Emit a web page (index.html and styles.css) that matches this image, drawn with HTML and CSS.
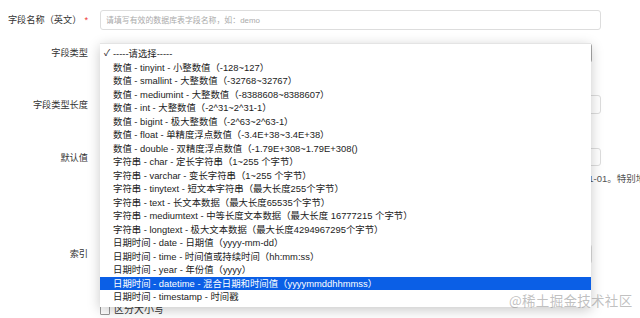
FILE: index.html
```html
<!DOCTYPE html>
<html lang="zh-CN">
<head>
    <meta charset="UTF-8">
    <meta name="viewport" content="width=device-width, initial-scale=1.0">
    <title>新增字段</title>
    <link rel="stylesheet" href="styles.css">
</head>
<body>
    <div class="form">
        <div class="row row-name">
            <label class="label">字段名称（英文）<span class="required">*</span></label>
            <div class="field">
                <input type="text" class="input" placeholder="请填写有效的数据库表字段名称，如：demo">
            </div>
        </div>

        <div class="row row-type">
            <label class="label">字段类型</label>
            <div class="field">
                <div class="input select-box focused"></div>
            </div>
        </div>

        <div class="row row-length">
            <label class="label">字段类型长度</label>
            <div class="field">
                <input type="text" class="input">
            </div>
        </div>

        <div class="row row-default">
            <label class="label">默认值</label>
            <div class="field">
                <input type="text" class="input">
                <p class="hint">默认值为字段的初始值，不填写则为空；数值类型请直接填写数字，字符串类型填写内容，日期类型的格式如 2019-01-01。特别地，时间戳可填写当前时间</p>
            </div>
        </div>

        <div class="row row-index">
            <label class="label">索引</label>
            <div class="field">
                <div class="input select-box"></div>
            </div>
        </div>

        <div class="row row-case">
            <span class="label"></span>
            <div class="field">
                <label class="check"><span class="box"></span>区分大小写</label>
            </div>
        </div>
    </div>

    <!-- native select popup, open over the form -->
    <ul class="menu">
        <li class="checked">-----请选择-----</li>
        <li>数值 - tinyint - 小整数值（-128~127）</li>
        <li>数值 - smallint - 大整数值（-32768~32767）</li>
        <li>数值 - mediumint - 大整数值（-8388608~8388607）</li>
        <li>数值 - int - 大整数值（-2^31~2^31-1）</li>
        <li>数值 - bigint - 极大整数值（-2^63~2^63-1）</li>
        <li>数值 - float - 单精度浮点数值（-3.4E+38~3.4E+38）</li>
        <li>数值 - double - 双精度浮点数值（-1.79E+308~1.79E+308()</li>
        <li>字符串 - char - 定长字符串（1~255 个字节）</li>
        <li>字符串 - varchar - 变长字符串（1~255 个字节）</li>
        <li>字符串 - tinytext - 短文本字符串（最大长度255个字节）</li>
        <li>字符串 - text - 长文本数据（最大长度65535个字节）</li>
        <li>字符串 - mediumtext - 中等长度文本数据（最大长度 16777215 个字节）</li>
        <li>字符串 - longtext - 极大文本数据（最大长度4294967295个字节）</li>
        <li>日期时间 - date - 日期值（yyyy-mm-dd）</li>
        <li>日期时间 - time - 时间值或持续时间（hh:mm:ss）</li>
        <li>日期时间 - year - 年份值（yyyy）</li>
        <li class="active">日期时间 - datetime - 混合日期和时间值（yyyymmddhhmmss）</li>
        <li>日期时间 - timestamp - 时间戳</li>
    </ul>

    <div class="watermark">@稀土掘金技术社区</div>
</body>
</html>
```

FILE: styles.css
```css
body {
    margin: 0;
    background: #fff;
    font-family: "Liberation Sans", "Noto Sans CJK SC", sans-serif;
    color: #333;
    overflow: hidden;
    height: 318px;
    position: relative;
}
.form {
    padding-top: 10px;
}
.row {
    display: grid;
    grid-template-columns: 88px 501px;
    column-gap: 12px;
    align-items: start;
}
.label {
    font-size: 9.2px;
    line-height: 20px;
    text-align: right;
    color: #333;
    white-space: nowrap;
}
.required {
    color: #e33;
    margin-left: 3px;
}
.input {
    display: block;
    box-sizing: border-box;
    width: 100%;
    height: 20px;
    border: 1px solid #ddd;
    border-radius: 3px;
    padding: 0 5px;
    font-family: inherit;
    font-size: 7.9px;
    background: #fff;
}
.input::placeholder {
    color: #aaa;
}
.select-box {
    width: 492px;
}
.select-box.focused {
    border-color: #aaa;
}
.row-type {
    margin-top: 13px;
}
.row-length {
    margin-top: 32px;
}
.row-length .input {
    height: 19px;
}
.row-default {
    margin-top: 33px;
}
.row-default .input {
    height: 18px;
}
.hint {
    width: 540px;
    overflow: hidden;
    margin: 6px 0 0;
    font-size: 9.5px;
    line-height: 14px;
    color: #555;
    white-space: nowrap;
}
.row-index {
    margin-top: 58px;
}
.row-case {
    margin-top: 39px;
}
.check {
    display: flex;
    align-items: center;
    gap: 4px;
    font-size: 10px;
    line-height: 14px;
    color: #333;
}
.box {
    width: 8px;
    height: 8px;
    border: 1px solid #999;
    border-radius: 1px;
    background: #fff;
}
.menu {
    position: absolute;
    left: 100px;
    top: 43px;
    width: 491px;
    margin: 0;
    padding: 3px 0;
    list-style: none;
    background: #fff;
    border-top: 1px solid #e4e4e4;
    box-shadow: 0 3px 12px rgba(0, 0, 0, 0.22);
    font-size: 9.4px;
    line-height: 13.5px;
    color: #222;
}
.menu li {
    padding-left: 13px;
    white-space: nowrap;
    position: relative;
}
.menu li.checked::before {
    content: "✓";
    position: absolute;
    left: 4px;
    font-size: 9px;
}
.menu li.active {
    background: #0b5fe6;
    color: #fff;
}
.watermark {
    position: absolute;
    left: 509px;
    top: 290px;
    font-size: 13.5px;
    line-height: 20px;
    color: rgba(140, 140, 140, 0.55);
    font-family: "Noto Sans CJK SC", sans-serif;
    letter-spacing: 0.3px;
}
```
